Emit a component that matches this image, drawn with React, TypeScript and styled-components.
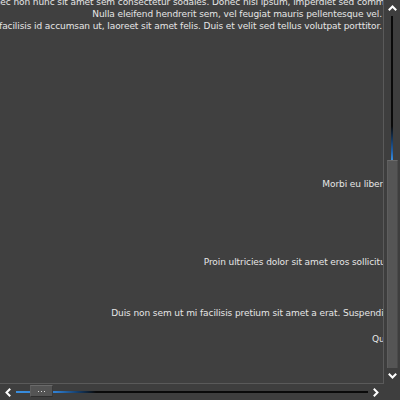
import React from "react";
import styled, { createGlobalStyle } from "styled-components";

const Global = createGlobalStyle`
  html, body { margin: 0; padding: 0; background: #404040; }
  #root { width: 400px; height: 400px; }
`;

const Frame = styled.div`
  width: 400px;
  height: 400px;
  display: grid;
  grid-template-columns: 384px 16px;
  grid-template-rows: 384px 16px;
  background: #3e3e3e;
`;

const Viewport = styled.div`
  background: #404040;
  border-right: 1px solid #5a5a5a;
  border-bottom: 1px solid #5a5a5a;
  overflow: hidden;
  display: flex;
  flex-direction: column;
  font-family: "DejaVu Sans", sans-serif;
  font-size: 9px;
  letter-spacing: -0.09px;
  line-height: 12px;
  color: #e6e6e6;
`;

const Line = styled.div<{ $gap: number; $over: number }>`
  display: flex;
  justify-content: flex-end;
  white-space: nowrap;
  margin-top: ${(p) => p.$gap}px;
  margin-right: ${(p) => -p.$over}px;
  flex: none;
  & > span { flex: none; }
`;

const VBar = styled.div`
  display: flex;
  flex-direction: column;
  background: #3e3e3e;
`;

const HBar = styled.div`
  display: flex;
  flex-direction: row;
  background: #3e3e3e;
`;

const ArrowBox = styled.div`
  width: 16px;
  height: 16px;
  flex: none;
  display: flex;
  align-items: center;
  justify-content: center;
`;

const VTrack = styled.div`
  flex: 1;
  position: relative;
  display: flex;
  justify-content: center;
`;

const VLine = styled.div`
  width: 2px;
  height: 100%;
  background: linear-gradient(
    to bottom,
    #0a0a0a 0%,
    #0a0a0a 110px,
    #1f5fa8 135px,
    #3a8fe0 144px
  );
`;

const VThumb = styled.div`
  position: absolute;
  left: 3px;
  right: 2px;
  top: 144px;
  bottom: 0;
  background: #555555;
  border-top: 1px solid #6a6a6a;
  border-left: 1px solid #5e5e5e;
  border-right: 1px solid #4a4a4a;
  box-sizing: border-box;
`;

const HTrack = styled.div`
  flex: 1;
  position: relative;
  display: flex;
  align-items: center;
`;

const HLine = styled.div`
  height: 2px;
  width: 100%;
  background: linear-gradient(
    to right,
    #3a8fe0 0px,
    #2f7ed0 40px,
    #153d6a 62px,
    #0a0a0a 80px,
    #0a0a0a 100%
  );
`;

const HThumb = styled.div`
  position: absolute;
  left: 14px;
  top: 1px;
  width: 23px;
  height: 12px;
  box-sizing: border-box;
  background: #545454;
  border-top: 1px solid #6a6a6a;
  border-bottom: 1px solid #2e2e2e;
  border-left: 1px solid #5e5e5e;
  border-right: 1px solid #3a3a3a;
  display: flex;
  align-items: center;
  justify-content: center;
  gap: 2px;
`;

const Dot = styled.span`
  width: 1px;
  height: 1px;
  background: #d8d8d8;
`;

const Corner = styled.div`
  background: #3e3e3e;
`;

type Dir = "up" | "down" | "left" | "right";
const pts: Record<Dir, string> = {
  up: "1.5,5.5 4.5,2.5 7.5,5.5",
  down: "1.5,2.5 4.5,5.5 7.5,2.5",
  left: "5.5,1.5 2.5,4.5 5.5,7.5",
  right: "2.5,1.5 5.5,4.5 2.5,7.5",
};

const Chevron = ({ dir }: { dir: Dir }) => (
  <svg width="9" height="9" viewBox="0 0 9 9">
    <polyline points={pts[dir]} fill="none" stroke="#ffffff" strokeWidth="2" strokeLinecap="square" />
  </svg>
);

const lines = [
  { t: "Donec non nunc sit amet sem consectetur sodales. Donec nisi ipsum, imperdiet sed commodo", gap: -4, over: 18 },
  { t: "Nulla eleifend hendrerit sem, vel feugiat mauris pellentesque vel.", gap: 0, over: -1 },
  { t: "Nam facilisis id accumsan ut, laoreet sit amet felis. Duis et velit sed tellus volutpat porttitor.", gap: 0, over: -1 },
  { t: "Morbi eu libero.", gap: 146, over: 8 },
  { t: "Proin ultricies dolor sit amet eros sollicitudin.", gap: 66, over: 19 },
  { t: "Duis non sem ut mi facilisis pretium sit amet a erat. Suspendisse.", gap: 39, over: 18 },
  { t: "Quisque.", gap: 14, over: 28 },
];

export default function App() {
  return (
    <>
      <Global />
      <Frame>
        <Viewport>
          {lines.map((l, i) => (
            <Line key={i} $gap={l.gap} $over={l.over}>
              <span>{l.t}</span>
            </Line>
          ))}
        </Viewport>
        <VBar>
          <ArrowBox>
            <Chevron dir="up" />
          </ArrowBox>
          <VTrack>
            <VLine />
            <VThumb />
          </VTrack>
          <ArrowBox>
            <Chevron dir="down" />
          </ArrowBox>
        </VBar>
        <HBar>
          <ArrowBox>
            <Chevron dir="left" />
          </ArrowBox>
          <HTrack>
            <HLine />
            <HThumb>
              <Dot />
              <Dot />
              <Dot />
            </HThumb>
          </HTrack>
          <ArrowBox>
            <Chevron dir="right" />
          </ArrowBox>
        </HBar>
        <Corner />
      </Frame>
    </>
  );
}
